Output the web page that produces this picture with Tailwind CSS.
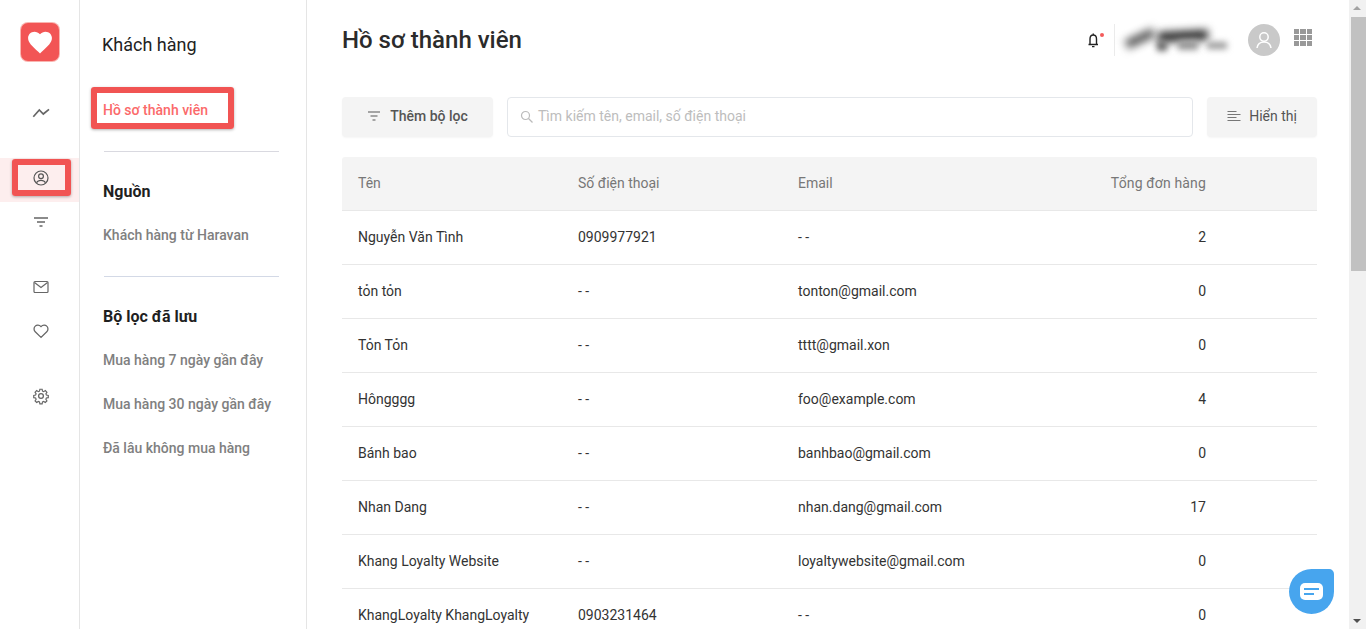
<!DOCTYPE html>
<html lang="vi">
  <head>
    <meta charset="UTF-8" />
    <title>Hồ sơ thành viên</title>
    <script src="https://cdn.jsdelivr.net/npm/@tailwindcss/browser@4"></script>
  </head>
  <body class="h-[629px] overflow-hidden bg-white font-['Roboto',sans-serif] text-[14px] text-[#333]">
    <div class="flex h-[629px]">
      <!-- Icon rail -->
      <nav class="relative flex w-[80px] shrink-0 flex-col items-center border-r border-[#e5e5e5] pt-[23px]">
        <div class="ml-[1px] flex h-[38px] w-[38px] items-center justify-center rounded-[7px] bg-[#f25555] ring-1 ring-[#f9b5b0]">
          <svg width="26" height="24" viewBox="0 0 24 22"><path fill="#fff" d="M12 21.5 10.4 20C4.6 14.8 1 11.5 1 7.4 1 4.1 3.6 1.5 6.9 1.5c1.9 0 3.7.9 5.1 2.4 1.4-1.5 3.200-2.400 5.100-2.400 3.300 0 5.900 2.600 5.900 5.900 0 4.100-3.600 7.400-9.400 12.600z"/></svg>
        </div>
        <svg class="ml-[3px] mt-[43px]" width="18" height="18" viewBox="0 0 18 18" fill="none" stroke="#666" stroke-width="1.700"><path d="M1.300 12.700 7.300 6l4 4L17 5.300"/></svg>
        <div class="mt-[36px] flex h-[44px] w-full items-start justify-center bg-[#fdeeee] pl-[3px] pt-[11px]">
          <svg width="18" height="18" viewBox="0 0 18 18" fill="none" stroke="#555" stroke-width="1.200"><circle cx="9" cy="9" r="7"/><circle cx="9" cy="7.200" r="2.400"/><path d="M4.500 13.800c1-1.900 2.600-2.500 4.500-2.500s3.500.6 4.500 2.500"/></svg>
        </div>
        <svg class="ml-[3px] mt-[11px]" width="18" height="18" viewBox="0 0 18 18" fill="none" stroke="#666" stroke-width="1.300"><path d="M2 5h14M5 9h8M7.500 13h3"/></svg>
        <svg class="ml-[3px] mt-[47px]" width="18" height="18" viewBox="0 0 18 18" fill="none" stroke="#666" stroke-width="1.200"><rect x="2" y="3.500" width="14" height="11" rx="1"/><path d="m2.500 4.500 6.500 5 6.500-5"/></svg>
        <svg class="ml-[3px] mt-[26px]" width="18" height="18" viewBox="0 0 24 24" fill="none" stroke="#666" stroke-width="1.700"><path d="M12 20.500 4.300 13C2.200 10.900 2.200 7.500 4.300 5.500c2-2 5.300-2 7.700.6 2.400-2.600 5.700-2.600 7.700-.6 2.100 2 2.100 5.400 0 7.500z"/></svg>
        <svg class="ml-[3px] mt-[47px]" width="18" height="18" viewBox="0 0 24 24" fill="none" stroke="#666" stroke-width="1.700"><circle cx="12" cy="12" r="3.200"/><path d="M10.300 2.500h3.400l.5 2.800 1.800.8 2.400-1.600 2.400 2.400-1.600 2.400.8 1.800 2.800.5v3.400l-2.800.5-.8 1.800 1.600 2.400-2.400 2.400-2.400-1.600-1.800.8-.5 2.800h-3.400l-.5-2.800-1.800-.8-2.400 1.600-2.400-2.400 1.600-2.400-.8-1.800-2.800-.5v-3.400l2.800-.5.800-1.800-1.600-2.400 2.400-2.400 2.400 1.600 1.800-.8z" transform="translate(12 12) scale(.9) translate(-12 -12.500)"/></svg>
        <!-- annotation box -->
        <div class="absolute left-[12px] top-[159px] h-[37px] w-[59px] rounded-[3px] border-[6px] border-[#f15453] shadow-[0_1px_3px_rgba(0,0,0,0.3)]"></div>
      </nav>

      <!-- Secondary sidebar -->
      <aside class="relative w-[227px] shrink-0 border-r border-[#e5e5e5] pl-[23px] pr-[27px]">
        <h2 class="-ml-px mt-[32px] h-[25px] text-[18px] leading-[25px] font-normal text-[#222]">Khách hàng</h2>
        <a class="mt-[43px] block h-[20px] text-[14px] leading-[20px] font-medium text-[#fb6a6a]">Hồ sơ thành viên</a>
        <div class="mt-[31px] ml-px h-px bg-[#d9d9e0]"></div>
        <h3 class="mt-[30px] h-[20px] text-[16px] leading-[20px] font-bold text-[#1f1f1f]">Nguồn</h3>
        <a class="mt-[23px] block h-[20px] leading-[20px] font-medium text-[#808080]">Khách hàng từ Haravan</a>
        <div class="mt-[31px] ml-px h-px bg-[#d3d9e6]"></div>
        <h3 class="mt-[30px] h-[20px] text-[16px] leading-[20px] font-bold text-[#1f1f1f]">Bộ lọc đã lưu</h3>
        <ul class="mt-[23px] flex flex-col gap-[24px] leading-[20px] font-medium text-[#808080]">
          <li class="h-[20px]">Mua hàng 7 ngày gần đây</li>
          <li class="h-[20px]">Mua hàng 30 ngày gần đây</li>
          <li class="h-[20px]">Đã lâu không mua hàng</li>
        </ul>
        <!-- annotation box -->
        <div class="absolute left-[11px] top-[87px] h-[42px] w-[143px] rounded-[3px] border-[6px] border-[#f15453] shadow-[0_1px_3px_rgba(0,0,0,0.3)]"></div>
      </aside>

      <!-- Main -->
      <main class="w-[1042px] shrink-0 pl-[35px] pr-[32px]">
        <header class="flex h-[97px] items-start justify-between">
          <h1 class="mt-[25px] text-[24px] leading-[30px] font-medium text-[#2b2b2b]">Hồ sơ thành viên</h1>
          <div class="mr-[5px] mt-[24px] flex items-start">
            <div class="relative mr-[12px] mt-[8px] h-[16px] w-[16px]">
              <svg width="16" height="16" viewBox="0 0 16 16" fill="none" stroke="#222" stroke-width="1.400"><path d="M2.500 12.500h9.500M4 12.500V7c0-2.200 1.300-4 3.200-4s3.300 1.800 3.300 4v5.500M6 14.600h2.500M7.250 3V1.500"/></svg>
              <span class="absolute right-[-2px] top-[1px] h-[4px] w-[4px] rounded-full bg-[#f45b5b]"></span>
            </div>
            <div class="h-[32px] w-px bg-[#ebebeb]"></div>
            <div class="relative ml-[3px] mt-[1px] h-[30px] w-[113px]">
              <div class="absolute left-[7px] top-[9px] h-[9px] w-[30px] -rotate-[25deg] bg-[#555] blur-[4px]"></div>
              <div class="absolute left-[40px] top-[6px] h-[10px] w-[50px] -rotate-3 bg-[#222] blur-[4px]"></div>
              <div class="absolute left-[39px] top-[16px] h-[10px] w-[10px] bg-[#666] blur-[3px]"></div>
              <div class="absolute left-[60px] top-[15px] h-[10px] w-[20px] bg-[#999] blur-[3px]"></div>
              <div class="absolute left-[89px] top-[17px] h-[7px] w-[20px] bg-[#999] blur-[3px]"></div>
            </div>
            <div class="ml-[17px] flex h-[32px] w-[32px] items-center justify-center rounded-full bg-[#c9c9c9]">
              <svg width="20" height="20" viewBox="0 0 20 20" fill="none" stroke="#fff" stroke-width="1.500"><circle cx="10" cy="7" r="4.200"/><path d="M3 18c.6-3.800 3.200-6 7-6s6.400 2.200 7 6"/></svg>
            </div>
            <div class="ml-[14px] mt-[5px] grid w-[18px] grid-cols-3 gap-[1px]">
              <i class="h-[5px] bg-[#999]"></i><i class="h-[5px] bg-[#999]"></i><i class="h-[5px] bg-[#999]"></i>
              <i class="h-[5px] bg-[#999]"></i><i class="h-[5px] bg-[#999]"></i><i class="h-[5px] bg-[#999]"></i>
              <i class="h-[5px] bg-[#999]"></i><i class="h-[5px] bg-[#999]"></i><i class="h-[5px] bg-[#999]"></i>
            </div>
          </div>
        </header>

        <!-- Toolbar -->
        <div class="flex h-[40px] gap-[14px]">
          <button class="flex w-[151px] items-center justify-center gap-[9px] rounded-[4px] bg-[#f4f4f4] pb-[2px] font-medium text-[#555] shadow-[0_1px_2px_rgba(0,0,0,0.04)]">
            <svg width="14" height="14" viewBox="0 0 14 14" fill="none" stroke="#555" stroke-width="1.200"><path d="M1 3h12M3.500 7h7M5.500 11h3"/></svg>
            Thêm bộ lọc
          </button>
          <div class="flex flex-1 items-center rounded-[4px] border border-[#e4e7eb] pb-[2px] pl-[12px] text-[#bdbdbd]">
            <svg width="13" height="13" viewBox="0 0 13 13" fill="none" stroke="#bbb" stroke-width="1.200"><circle cx="5.500" cy="5.500" r="4"/><path d="m8.500 8.500 4 4"/></svg>
            <span class="ml-[5px]">Tìm kiếm tên, email, số điện thoại</span>
          </div>
          <button class="flex w-[110px] items-center justify-center gap-[8px] rounded-[4px] bg-[#f4f4f4] pb-[2px] text-[#555] shadow-[0_1px_2px_rgba(0,0,0,0.04)]">
            <svg width="14" height="12" viewBox="0 0 14 12" fill="none" stroke="#777" stroke-width="1"><path d="M.500 1.500h9M.500 4.500h13M.500 7.500h9M.500 10.500h13"/></svg>
            Hiển thị
          </button>
        </div>

        <!-- Table -->
        <div class="mt-[20px]">
          <div class="grid h-[54px] grid-cols-[220px_220px_220px_220px_1fr] items-center rounded-t-[3px] border-b border-[#e8e8e8] bg-[#f4f4f4] text-[#777]">
            <span class="pl-[16px]">Tên</span><span class="pl-[16px]">Số điện thoại</span><span class="pl-[16px]">Email</span><span class="pr-[16px] text-right tracking-[0.15px]">Tổng đơn hàng</span>
          </div>
          <div class="grid h-[54px] grid-cols-[220px_220px_220px_220px_1fr] items-center border-b border-[#e8e8e8]">
            <span class="pl-[16px]">Nguyễn Văn Tình</span><span class="pl-[16px]">0909977921</span><span class="pl-[16px]">- -</span><span class="pr-[16px] text-right">2</span>
          </div>
          <div class="grid h-[54px] grid-cols-[220px_220px_220px_220px_1fr] items-center border-b border-[#e8e8e8]">
            <span class="pl-[16px]">tỏn tỏn</span><span class="pl-[16px]">- -</span><span class="pl-[16px]">tonton@gmail.com</span><span class="pr-[16px] text-right">0</span>
          </div>
          <div class="grid h-[54px] grid-cols-[220px_220px_220px_220px_1fr] items-center border-b border-[#e8e8e8]">
            <span class="pl-[16px]">Tỏn Tỏn</span><span class="pl-[16px]">- -</span><span class="pl-[16px]">tttt@gmail.xon</span><span class="pr-[16px] text-right">0</span>
          </div>
          <div class="grid h-[54px] grid-cols-[220px_220px_220px_220px_1fr] items-center border-b border-[#e8e8e8]">
            <span class="pl-[16px]">Hôngggg</span><span class="pl-[16px]">- -</span><span class="pl-[16px]">foo@example.com</span><span class="pr-[16px] text-right">4</span>
          </div>
          <div class="grid h-[54px] grid-cols-[220px_220px_220px_220px_1fr] items-center border-b border-[#e8e8e8]">
            <span class="pl-[16px]">Bánh bao</span><span class="pl-[16px]">- -</span><span class="pl-[16px]">banhbao@gmail.com</span><span class="pr-[16px] text-right">0</span>
          </div>
          <div class="grid h-[54px] grid-cols-[220px_220px_220px_220px_1fr] items-center border-b border-[#e8e8e8]">
            <span class="pl-[16px]">Nhan Dang</span><span class="pl-[16px]">- -</span><span class="pl-[16px]">nhan.dang@gmail.com</span><span class="pr-[16px] text-right">17</span>
          </div>
          <div class="grid h-[54px] grid-cols-[220px_220px_220px_220px_1fr] items-center border-b border-[#e8e8e8]">
            <span class="pl-[16px]">Khang Loyalty Website</span><span class="pl-[16px]">- -</span><span class="pl-[16px]">loyaltywebsite@gmail.com</span><span class="pr-[16px] text-right">0</span>
          </div>
          <div class="grid h-[54px] grid-cols-[220px_220px_220px_220px_1fr] items-center border-b border-[#e8e8e8]">
            <span class="pl-[16px]">KhangLoyalty KhangLoyalty</span><span class="pl-[16px]">0903231464</span><span class="pl-[16px]">- -</span><span class="pr-[16px] text-right">0</span>
          </div>
        </div>
      </main>

      <!-- Scrollbar -->
      <div class="relative w-[17px] shrink-0 bg-[#f1f1f1]">
        <div class="absolute left-[4px] top-[6px] h-0 w-0 border-x-[4px] border-b-[4px] border-x-transparent border-b-[#a3a3a3]"></div>
        <div class="absolute left-[2px] right-0 top-[17px] h-[254px] bg-[#c1c1c1]"></div>
        <div class="absolute bottom-[6px] left-[4px] h-0 w-0 border-x-[4px] border-t-[4px] border-x-transparent border-t-[#505050]"></div>
      </div>
    </div>

    <!-- Chat bubble -->
    <div class="fixed left-[1289px] top-[569px] flex h-[45px] w-[45px] items-center justify-center rounded-[23px] rounded-tr-[5px] bg-[#47a5ee]">
      <div class="flex h-[17px] w-[23px] flex-col justify-center gap-[3px] rounded-[5px] bg-white pl-[4px]">
        <i class="h-[2px] w-[15px] bg-[#47a5ee]"></i>
        <i class="h-[2px] w-[10px] bg-[#47a5ee]"></i>
      </div>
    </div>
  </body>
</html>
